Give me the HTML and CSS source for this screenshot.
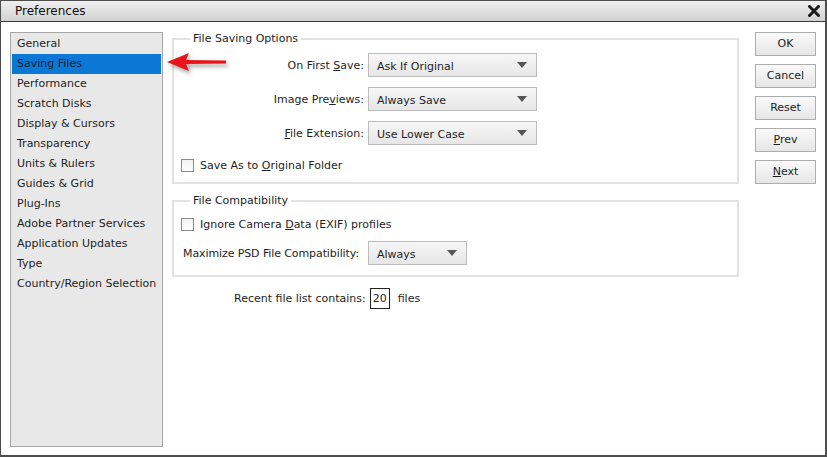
FILE: index.html
```html
<!DOCTYPE html>
<html>
<head>
<meta charset="utf-8">
<title>Preferences</title>
<link rel="stylesheet" href="styles.css">
</head>
<body>
<div class="window">
  <div class="titlebar">
    <span class="title">Preferences</span>
    <svg class="close" width="12" height="12" viewBox="0 0 12 12"><path d="M1.5 1.5 L10.5 10.5 M10.5 1.5 L1.5 10.5" stroke="#1a1a1a" stroke-width="3" stroke-linecap="square"/></svg>
  </div>
  <div class="content">
    <ul class="sidebar">
      <li>General</li>
      <li class="selected">Saving Files</li>
      <li>Performance</li>
      <li>Scratch Disks</li>
      <li>Display &amp; Cursors</li>
      <li>Transparency</li>
      <li>Units &amp; Rulers</li>
      <li>Guides &amp; Grid</li>
      <li>Plug-Ins</li>
      <li>Adobe Partner Services</li>
      <li>Application Updates</li>
      <li>Type</li>
      <li>Country/Region Selection</li>
    </ul>
    <div class="main">
      <fieldset class="group group-saving">
        <legend>File Saving Options</legend>
        <div class="form-grid">
          <label class="field-label">On First <u>S</u>ave:</label>
          <div class="select"><span>Ask If Original</span><i class="caret"></i></div>
          <label class="field-label">Image Pre<u>v</u>iews:</label>
          <div class="select"><span>Always Save</span><i class="caret"></i></div>
          <label class="field-label"><u>F</u>ile Extension:</label>
          <div class="select"><span>Use Lower Case</span><i class="caret"></i></div>
        </div>
        <div class="check-row check-saving"><span class="checkbox"></span><span>Save As to <u>O</u>riginal Folder</span></div>
      </fieldset>
      <fieldset class="group group-compat">
        <legend>File Compatibility</legend>
        <div class="check-row"><span class="checkbox"></span><span>Ignore Camera <u>D</u>ata (EXIF) profiles</span></div>
        <div class="compat-row">
          <label class="compat-label">Maximize PSD File Compatibility:</label>
          <div class="select select-short"><span>Always</span><i class="caret"></i></div>
        </div>
      </fieldset>
      <div class="recent-row">
        <span>Recent file list contains:</span>
        <span class="num-box">20</span>
        <span>files</span>
      </div>
    </div>
    <div class="buttons">
      <div class="btn">OK</div>
      <div class="btn">Cancel</div>
      <div class="btn">Reset</div>
      <div class="btn"><u>P</u>rev</div>
      <div class="btn"><u>N</u>ext</div>
    </div>
    <svg class="arrow" width="68" height="28" viewBox="0 0 68 28">
      <path d="M3 13 L25 4 L22 11 L62 11.5 L62 14.5 L22 15 L25 22 Z" fill="#e8141a"/>
    </svg>
  </div>
</div>
</body>
</html>
```
FILE: styles.css
```css
* { box-sizing: border-box; }
html, body { margin: 0; padding: 0; }
body {
  width: 827px;
  height: 457px;
  background: #ffffff;
  font-family: "DejaVu Sans", Verdana, sans-serif;
  font-size: 11px;
  color: #1e1e1e;
  overflow: hidden;
}
.window {
  width: 827px;
  height: 457px;
  border: 1px solid #4d4d4d;
  border-bottom-width: 2px;
  border-right-width: 2px;
  background: #fff;
  display: flex;
  flex-direction: column;
}
.titlebar {
  height: 21px;
  flex: none;
  background: linear-gradient(#f0f0f0, #d2d2d2);
  border-bottom: 1px solid #3a3a3a;
  display: flex;
  align-items: center;
  justify-content: space-between;
  padding: 0 5px 0 14px;
}
.title { font-size: 12px; color: #111; }
.close { display: block; }
.content {
  position: relative;
  flex: 1;
  display: flex;
  align-items: flex-start;
  padding: 10px 10px 0 9px;
}
.sidebar {
  list-style: none;
  margin: 0;
  padding: 1px 1px;
  width: 153px;
  height: 415px;
  background: #e8e8e8;
  border: 1px solid #a6a6a6;
  flex: none;
}
.sidebar li {
  height: 20px;
  line-height: 20px;
  padding-left: 5px;
  white-space: nowrap;
  color: #1e1e1e;
}
.sidebar li.selected { background: #0a78d4; color: #10203a; }
.main {
  width: 567px;
  margin-left: 9px;
  flex: none;
}
.group {
  margin: 0;
  border: 2px solid #e2e2e2;
  padding: 0 9px 0 9px;
}
.group legend {
  margin-left: 7px;
  padding: 0 3px 0 3px;
  line-height: 14px;
  font-size: 11px;
}
.group-saving { height: 152px; padding-top: 7px; }
.form-grid {
  display: grid;
  grid-template-columns: 181px 169px;
  column-gap: 4px;
  row-gap: 10px;
  align-items: center;
}
.field-label { text-align: right; white-space: nowrap; }
.select {
  height: 24px;
  border: 1px solid #bcbcbc;
  background: linear-gradient(#f7f7f7, #e6e6e6);
  display: flex;
  align-items: center;
  justify-content: space-between;
  padding: 0 8px 0 8px;
}
.select span { padding-top: 2px; }
.caret {
  width: 0; height: 0;
  border-left: 5px solid transparent;
  border-right: 5px solid transparent;
  border-top: 6px solid #555;
  margin-right: 1px;
}
.select-short { width: 99px; flex: none; }
.check-row {
  display: flex;
  align-items: center;
  gap: 6px;
  height: 20px;
  margin-left: -2px;
}
.check-saving { margin-top: 10px; }
.checkbox {
  width: 13px; height: 13px;
  border: 1px solid #8a8a8a;
  background: linear-gradient(#f3f3f3, #fdfdfd);
  flex: none;
}
.group-compat { margin-top: 10px; height: 83px; padding-top: 6px; }
.compat-row {
  display: flex;
  align-items: center;
  gap: 4px;
  margin-top: 7px;
}
.compat-label { width: 181px; flex: none; white-space: nowrap; letter-spacing: -0.1px; }
.recent-row {
  display: flex;
  align-items: center;
  margin-top: 11px;
  padding-left: 62px;
  height: 21px;
}
.num-box {
  width: 20px; height: 21px;
  border: 1px solid #222;
  text-align: center;
  line-height: 19px;
  margin: 0 8px 0 4px;
}
.buttons {
  margin-left: 16px;
  display: flex;
  flex-direction: column;
  gap: 8px;
  flex: none;
}
.btn {
  width: 61px;
  height: 24px;
  border: 1px solid #adadad;
  background: linear-gradient(#fafafa, #e6e6e6);
  text-align: center;
  line-height: 22px;
}
.arrow {
  position: absolute;
  left: 163px;
  top: 27px;
  filter: drop-shadow(2px 3px 2px rgba(0,0,0,0.35));
}
```
